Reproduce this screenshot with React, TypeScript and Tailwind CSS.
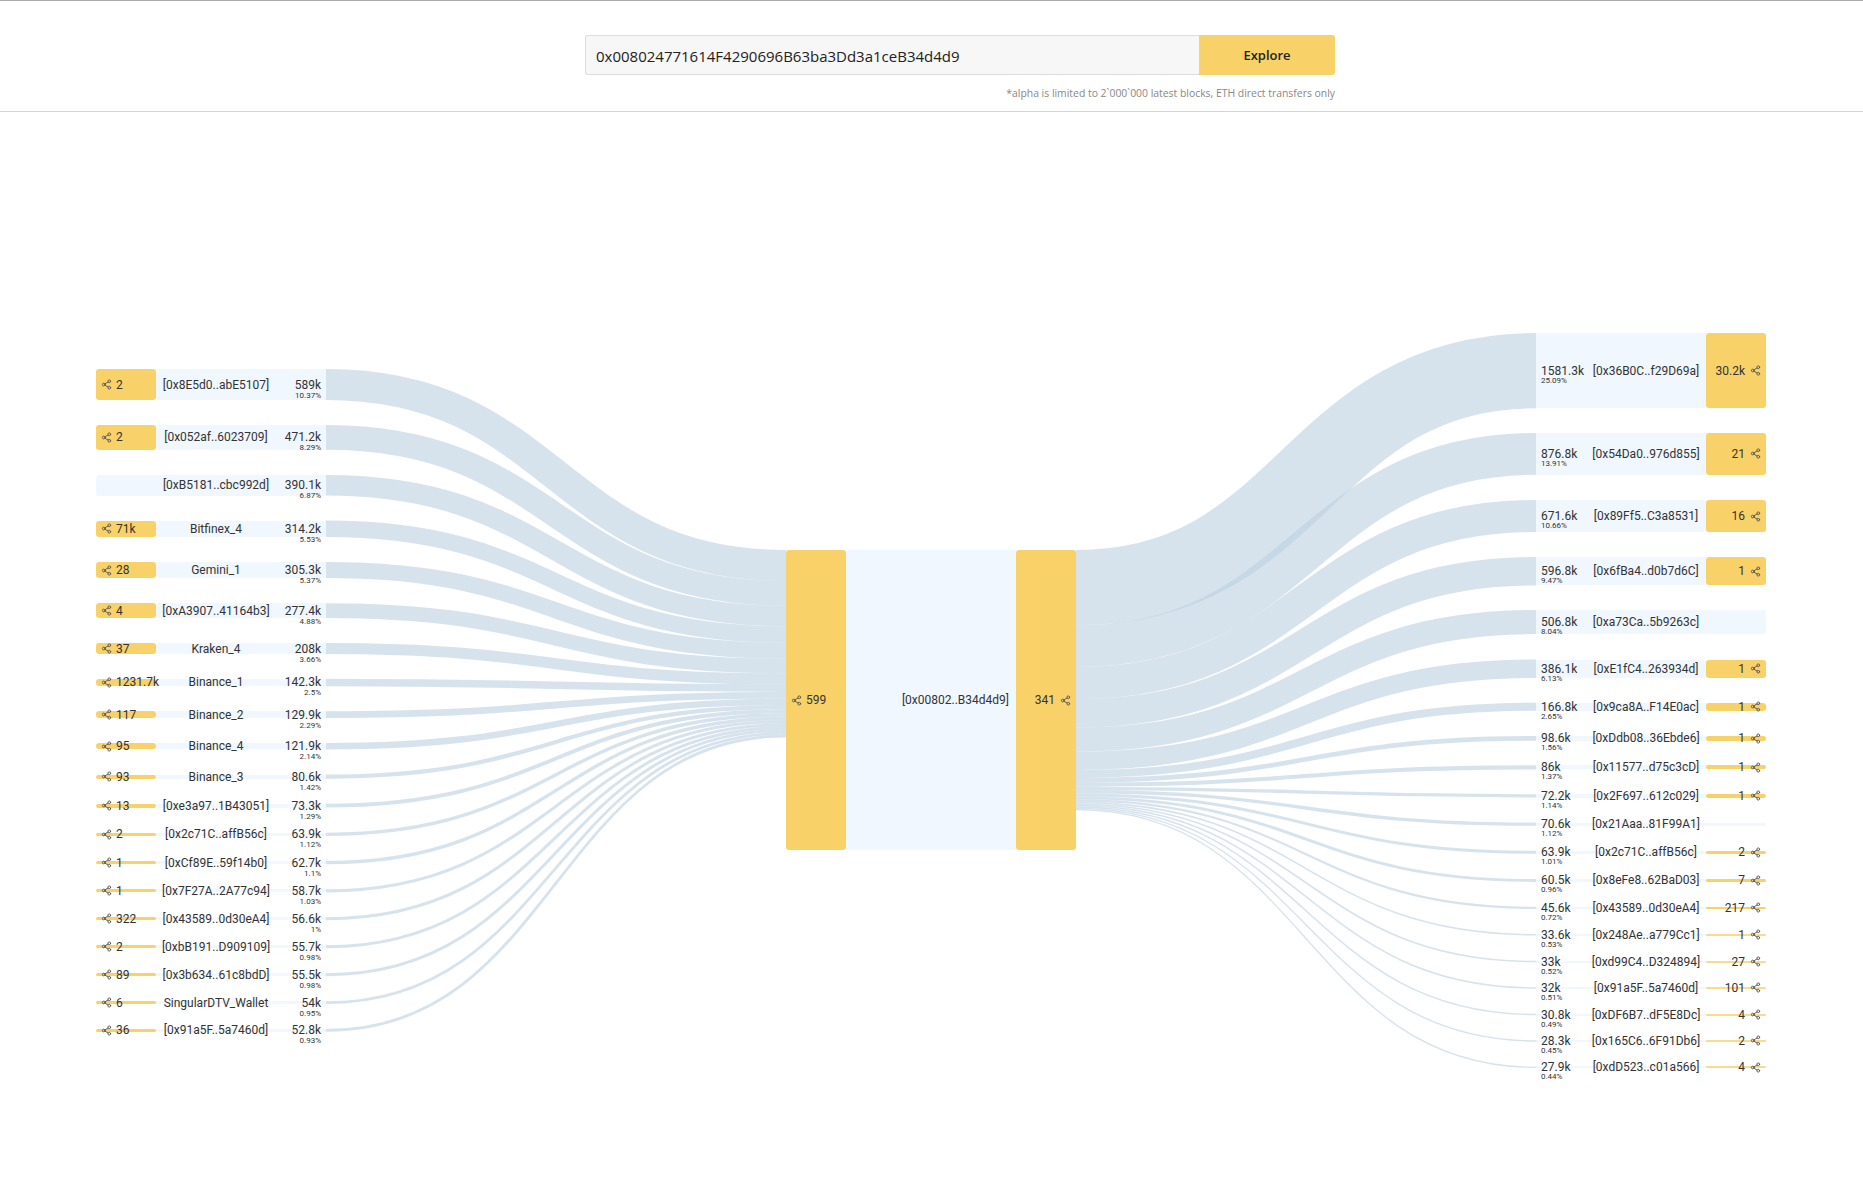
import { Share2 } from "lucide-react";

type Row = {
  value: string;
  pct: string;
  name: string;
  count?: string;
  top: number;
  height: number;
};

const LEFT_X = 96;
const RIGHT_X = 1536;
const CENTER_TOP = 550;

const leftRows: Row[] = [
  { count: "2", name: "[0x8E5d0..abE5107]", value: "589k", pct: "10.37%", top: 369, height: 31 },
  { count: "2", name: "[0x052af..6023709]", value: "471.2k", pct: "8.29%", top: 425, height: 24.8 },
  { name: "[0xB5181..cbc992d]", value: "390.1k", pct: "6.87%", top: 475, height: 20.5 },
  { count: "71k", name: "Bitfinex_4", value: "314.2k", pct: "5.53%", top: 520.5, height: 16.5 },
  { count: "28", name: "Gemini_1", value: "305.3k", pct: "5.37%", top: 562, height: 16 },
  { count: "4", name: "[0xA3907..41164b3]", value: "277.4k", pct: "4.88%", top: 603.3, height: 14.6 },
  { count: "37", name: "Kraken_4", value: "208k", pct: "3.66%", top: 643, height: 11 },
  { count: "1231.7k", name: "Binance_1", value: "142.3k", pct: "2.5%", top: 678.7, height: 7.5 },
  { count: "117", name: "Binance_2", value: "129.9k", pct: "2.29%", top: 711.3, height: 6.8 },
  { count: "95", name: "Binance_4", value: "121.9k", pct: "2.14%", top: 743, height: 6.4 },
  { count: "93", name: "Binance_3", value: "80.6k", pct: "1.42%", top: 774.5, height: 4.2 },
  { count: "13", name: "[0xe3a97..1B43051]", value: "73.3k", pct: "1.29%", top: 803.7, height: 3.9 },
  { count: "2", name: "[0x2c71C..affB56c]", value: "63.9k", pct: "1.12%", top: 832.7, height: 3.4 },
  { count: "1", name: "[0xCf89E..59f14b0]", value: "62.7k", pct: "1.1%", top: 861, height: 3.3 },
  { count: "1", name: "[0x7F27A..2A77c94]", value: "58.7k", pct: "1.03%", top: 889.3, height: 3.1 },
  { count: "322", name: "[0x43589..0d30eA4]", value: "56.6k", pct: "1%", top: 917.3, height: 3 },
  { count: "2", name: "[0xbB191..D909109]", value: "55.7k", pct: "0.98%", top: 945.3, height: 2.9 },
  { count: "89", name: "[0x3b634..61c8bdD]", value: "55.5k", pct: "0.98%", top: 973.3, height: 2.9 },
  { count: "6", name: "SingularDTV_Wallet", value: "54k", pct: "0.95%", top: 1001.3, height: 2.8 },
  { count: "36", name: "[0x91a5F..5a7460d]", value: "52.8k", pct: "0.93%", top: 1029, height: 2.8 },
];

const rightRows: Row[] = [
  { count: "30.2k", name: "[0x36B0C..f29D69a]", value: "1581.3k", pct: "25.09%", top: 333, height: 75.3 },
  { count: "21", name: "[0x54Da0..976d855]", value: "876.8k", pct: "13.91%", top: 433, height: 41.8 },
  { count: "16", name: "[0x89Ff5..C3a8531]", value: "671.6k", pct: "10.66%", top: 500, height: 32 },
  { count: "1", name: "[0x6fBa4..d0b7d6C]", value: "596.8k", pct: "9.47%", top: 557, height: 28.4 },
  { name: "[0xa73Ca..5b9263c]", value: "506.8k", pct: "8.04%", top: 610, height: 24.1 },
  { count: "1", name: "[0xE1fC4..263934d]", value: "386.1k", pct: "6.13%", top: 659.5, height: 18.4 },
  { count: "1", name: "[0x9ca8A..F14E0ac]", value: "166.8k", pct: "2.65%", top: 702.8, height: 7.9 },
  { count: "1", name: "[0xDdb08..36Ebde6]", value: "98.6k", pct: "1.56%", top: 736, height: 4.7 },
  { count: "1", name: "[0x11577..d75c3cD]", value: "86k", pct: "1.37%", top: 765.3, height: 4.1 },
  { count: "1", name: "[0x2F697..612c029]", value: "72.2k", pct: "1.14%", top: 794.2, height: 3.4 },
  { name: "[0x21Aaa..81F99A1]", value: "70.6k", pct: "1.12%", top: 822.5, height: 3.35 },
  { count: "2", name: "[0x2c71C..affB56c]", value: "63.9k", pct: "1.01%", top: 850.8, height: 3 },
  { count: "7", name: "[0x8eFe8..62BaD03]", value: "60.5k", pct: "0.96%", top: 879, height: 2.9 },
  { count: "217", name: "[0x43589..0d30eA4]", value: "45.6k", pct: "0.72%", top: 906.8, height: 2.2 },
  { count: "1", name: "[0x248Ae..a779Cc1]", value: "33.6k", pct: "0.53%", top: 934, height: 1.6 },
  { count: "27", name: "[0xd99C4..D324894]", value: "33k", pct: "0.52%", top: 960.8, height: 1.57 },
  { count: "101", name: "[0x91a5F..5a7460d]", value: "32k", pct: "0.51%", top: 987.2, height: 1.52 },
  { count: "4", name: "[0xDF6B7..dF5E8Dc]", value: "30.8k", pct: "0.49%", top: 1013.8, height: 1.46 },
  { count: "2", name: "[0x165C6..6F91Db6]", value: "28.3k", pct: "0.45%", top: 1040.3, height: 1.34 },
  { count: "4", name: "[0xdD523..c01a566]", value: "27.9k", pct: "0.44%", top: 1066.7, height: 1.32 },
];

// stroke of a link, curve runs through the middle of both ends
function linkPath(x0: number, y0: number, x1: number, y1: number) {
  const mid = (x0 + x1) / 2;
  return `M${x0},${y0} C${mid},${y0} ${mid},${y1} ${x1},${y1}`;
}

function Flows() {
  let leftY = CENTER_TOP;
  let rightY = CENTER_TOP;

  return (
    <svg className="absolute top-0 left-0" width={1863} height={1177}>
      {leftRows.map((row) => {
        const target = leftY + row.height / 2;
        leftY += row.height;
        return (
          <path
            key={row.name + row.top}
            d={linkPath(326, row.top + row.height / 2, 786, target)}
            fill="none"
            stroke="#bccfe0"
            strokeOpacity={0.61}
            strokeWidth={row.height}
          />
        );
      })}
      {rightRows.map((row) => {
        const source = rightY + row.height / 2;
        rightY += row.height;
        return (
          <path
            key={row.name + row.top}
            d={linkPath(1076, source, 1536, row.top + row.height / 2)}
            fill="none"
            stroke="#bccfe0"
            strokeOpacity={0.61}
            strokeWidth={row.height}
          />
        );
      })}
    </svg>
  );
}

function LeftNode({ row }: { row: Row }) {
  return (
    <div
      className="absolute flex w-[230px] items-center"
      style={{ left: LEFT_X, top: row.top, height: row.height }}
    >
      {row.count ? (
        <div className="relative z-10 flex h-full w-[60px] shrink-0 items-center rounded-[3px] bg-[#f8d168] pl-[5px]">
          <Share2 size={11} className="shrink-0 text-[#555]" />
          <span className="ml-[4px] whitespace-nowrap">{row.count}</span>
        </div>
      ) : (
        <div className="h-full w-[60px] shrink-0 rounded-l-[3px] bg-[#f0f7fe]" />
      )}
      <div className="flex h-full flex-1 items-center bg-[#f0f7fe]">
        <div className="w-[120px] text-center whitespace-nowrap">{row.name}</div>
        <div className="relative flex-1 pr-[5px] text-right whitespace-nowrap">
          {row.value}
          <div className="absolute top-[14px] right-[5px] text-[8px] leading-[9px]">{row.pct}</div>
        </div>
      </div>
    </div>
  );
}

function RightNode({ row }: { row: Row }) {
  // hairline rows: the reference anti-aliases them over two pixels
  const thin = row.height < 2;
  const height = thin ? 2 : row.height;
  const top = row.top + (row.height - height) / 2;

  return (
    <div
      className="absolute flex w-[230px] items-center"
      style={{ left: RIGHT_X, top, height }}
    >
      <div className="flex h-full flex-1 items-center bg-[#f0f7fe]">
        <div className="relative w-[50px] pl-[5px] whitespace-nowrap">
          {row.value}
          <div className="absolute top-[13px] left-[5px] text-[8px] leading-[9px]">{row.pct}</div>
        </div>
        <div className="w-[120px] text-center whitespace-nowrap">{row.name}</div>
      </div>
      {row.count ? (
        <div
          className={`flex h-full w-[60px] shrink-0 items-center justify-end rounded-[3px] pr-[5px] ${
            thin ? "bg-[#fadb8c]" : "bg-[#f8d168]"
          }`}
        >
          <span className="mr-[5px] whitespace-nowrap">{row.count}</span>
          <Share2 size={11} className="shrink-0 text-[#555]" />
        </div>
      ) : (
        <div className="h-full w-[60px] shrink-0 rounded-r-[3px] bg-[#f0f7fe]" />
      )}
    </div>
  );
}

function CenterNode() {
  return (
    <div className="absolute top-[550px] left-[786px] flex h-[300px] w-[290px] items-center">
      <div className="flex h-full w-[60px] shrink-0 items-center rounded-[3px] bg-[#f8d168] pl-[5px]">
        <Share2 size={11} className="shrink-0 text-[#555]" />
        <span className="ml-[4px]">599</span>
      </div>
      <div className="flex h-full flex-1 items-center justify-end bg-[#f0f7fe] pr-[7px] whitespace-nowrap">
        [0x00802..B34d4d9]
      </div>
      <div className="flex h-full w-[60px] shrink-0 items-center justify-end rounded-[3px] bg-[#f8d168] pr-[5px]">
        <span className="mr-[5px]">341</span>
        <Share2 size={11} className="shrink-0 text-[#555]" />
      </div>
    </div>
  );
}

export default function App() {
  return (
    <div className="min-h-[1177px] w-full bg-white font-['Roboto',sans-serif] text-xs text-[#333]">
      <header className="h-[112px] border-t border-b border-t-[#aaa] border-b-[#d5d5d5] pt-[34px] font-['Open_Sans',sans-serif]">
        <div className="ml-[585px] w-[750px]">
          <div className="flex h-10">
            <input
              readOnly
              value="0x008024771614F4290696B63ba3Dd3a1ceB34d4d9"
              className="h-full flex-1 rounded-l-[3px] border border-r-0 border-[#ddd] bg-[#f7f7f7] px-[10px] pt-[1px] text-[15px] text-[#222] outline-none"
            />
            <button className="h-full w-[136px] rounded-r-[3px] bg-[#f8d168] pt-[1px] text-[13px] font-semibold text-[#222]">
              Explore
            </button>
          </div>
          <p className="mt-[10px] text-right text-[10.4px] leading-[17px] text-[#888]">
            *alpha is limited to 2`000`000 latest blocks, ETH direct transfers only
          </p>
        </div>
      </header>
      <Flows />
      {leftRows.map((row) => (
        <LeftNode key={row.name + row.top} row={row} />
      ))}
      <CenterNode />
      {rightRows.map((row) => (
        <RightNode key={row.name + row.top} row={row} />
      ))}
    </div>
  );
}
